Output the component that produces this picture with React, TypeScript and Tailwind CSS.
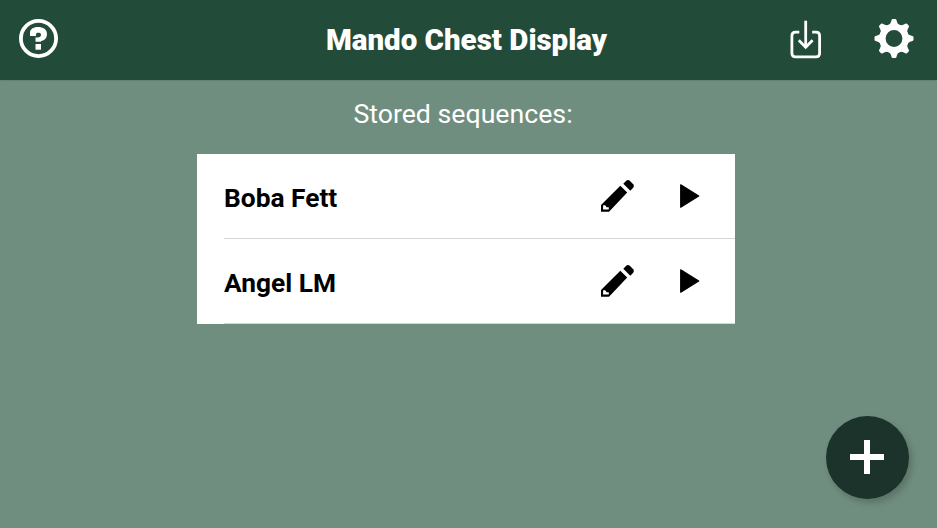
import React from "react";

const gearPoints = Array.from({ length: 8 }, (_, i) => i * 45);

function HelpIcon() {
  return (
    <svg width="40" height="40" viewBox="0 0 40 40" fill="none">
      <circle cx="19.5" cy="19.5" r="17.6" stroke="white" strokeWidth="3.8" />
      <path
        d="M11 17v-3.2C11 10.2 14.2 8 18.7 8C24.4 8 28 10.6 28 15C28 18.8 25.8 21.4 22 22V22.7H16.5V18.4H19.2C21.5 18.4 22 17 22 15.6C22 14.2 20.8 13.7 19.3 13.7C17.8 13.7 17 14.3 17 15.4V17Z"
        fill="white"
      />
      <rect x="16.5" y="25" width="5.5" height="5.7" fill="white" />
    </svg>
  );
}

function DownloadIcon() {
  return (
    <svg width="32" height="40" viewBox="0 0 32 40" fill="none" stroke="white" strokeWidth="2.8">
      <path d="M9.3 12.2H5.5Q1.9 12.2 1.9 15.8V33.2Q1.9 36.8 5.5 36.8H26Q29.6 36.8 29.6 33.2V15.8Q29.6 12.2 26 12.2H22.2" />
      <path d="M15.7 .7V27.5" />
      <path d="M8.8 20.3L15.7 27.2L22.6 20.3" />
    </svg>
  );
}

function GearIcon() {
  return (
    <svg width="40" height="40" viewBox="0 0 40 40" fill="none">
      <circle cx="20" cy="19.5" r="11.6" stroke="white" strokeWidth="6.4" />
      {gearPoints.map((angle) => (
        <path
          key={angle}
          d="M14.2 6.2Q16.5 5 17.1 2.7L17.5 1.1Q17.8 0 18.8 0H21.2Q22.2 0 22.5 1.1L22.9 2.7Q23.5 5 25.8 6.2L23 8H17Z"
          transform={`rotate(${angle} 20 19.5)`}
          fill="white"
        />
      ))}
    </svg>
  );
}

function PencilIcon() {
  return (
    <svg width="34" height="33" viewBox="0 0 34 33" fill="black">
      <path
        fillRule="evenodd"
        d="M0 32.7V26L19.3 6.7L26.2 13.5L8 32.7ZM2.1 26.3V30.6H7.8V28.3H5.6L4.2 26.3Z"
      />
      <path d="M22.3 4.7L25 1.9Q26.8 .1 28.8 1.8L32.2 5.2Q33.7 7 32.2 8.7L29.3 11.7Z" />
    </svg>
  );
}

function PlayIcon() {
  return (
    <svg width="20" height="24" viewBox="0 0 20 24">
      <path d="M.7 .8L18.7 12L.7 23.2Z" fill="black" stroke="black" strokeWidth="1.2" strokeLinejoin="round" />
    </svg>
  );
}

function SequenceRow({ name }: { name: string }) {
  return (
    <li className="ml-[27px] flex h-[85px] items-center border-b border-[#d6d6d6]">
      <span className="flex-1 pt-[3px] text-[26.3px] leading-8 font-bold text-black">{name}</span>
      <button aria-label="Edit" className="mr-[45px] mb-px">
        <PencilIcon />
      </button>
      <button aria-label="Play" className="mr-[35px]">
        <PlayIcon />
      </button>
    </li>
  );
}

export default function App() {
  return (
    <div className="flex h-screen w-full flex-col overflow-hidden bg-[#708e7f] font-['Roboto',sans-serif]">
      <header className="grid h-20 shrink-0 grid-cols-[1fr_auto_1fr] items-start bg-[#234b39] pr-[23px] pl-[19px] shadow-[0_0_2px_rgba(0,0,0,0.25)]">
        <button aria-label="Help" className="mt-[19px] justify-self-start">
          <HelpIcon />
        </button>
        <h1 className="mt-[22px] text-[29.5px] leading-9 font-black text-white">Mando Chest Display</h1>
        <div className="flex items-start justify-end gap-[52px]">
          <button aria-label="Import" className="mt-[20px]">
            <DownloadIcon />
          </button>
          <button aria-label="Settings" className="mt-[19px]">
            <GearIcon />
          </button>
        </div>
      </header>
      <main className="flex flex-1 flex-col items-center">
        <h2 className="mt-[18px] mr-[11px] text-[26.7px] leading-8 font-normal text-white">Stored sequences:</h2>
        <ul className="mt-6 mr-[5px] w-[538px] bg-white">
          <SequenceRow name="Boba Fett" />
          <SequenceRow name="Angel LM" />
        </ul>
        <button
          aria-label="Add sequence"
          className="mt-auto mr-7 mb-[29px] flex size-[83px] items-center justify-center self-end rounded-full bg-[#1b332a] pr-px pb-px shadow-[3px_4px_7px_rgba(0,0,0,0.2)]"
        >
          <svg width="34" height="34" viewBox="0 0 34 34" fill="white">
            <path d="M14 0h6v14h14v6H20v14h-6V20H0v-6h14z" />
          </svg>
        </button>
      </main>
    </div>
  );
}
